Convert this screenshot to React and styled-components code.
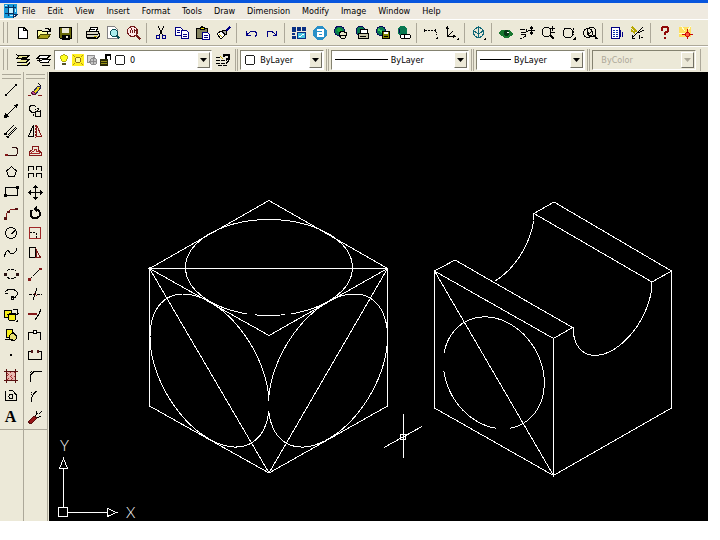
import React from 'react'
import styled, { createGlobalStyle } from 'styled-components'

const face = '#ece9d8'
const shadow = '#aca899'

const menus = ['File', 'Edit', 'View', 'Insert', 'Format', 'Tools', 'Draw', 'Dimension', 'Modify', 'Image', 'Window', 'Help']

// every icon is drawn on a 16 x 16 grid
const icons = {
    new: <path d="M3.500 2.500H9l3 3v8H3.500zM8.500 2.500v3h3" fill="#fff" />,
    open: <><path d="M1.500 13.500V5.500h4l1 1h5v3" fill="#ffffa0" /><path d="M1.500 13.500L4.500 9.500h10l-3 4z" fill="#a8a018" stroke="#484808" /><path d="M9 3.500h3l2 2M14 3v3h-3" /></>,
    save: <><path d="M2.500 2.500h12v11h-11l-1-1z" fill="#686808" /><path d="M5 3h7v5H5z" fill="#ece9d8" stroke="none" /><path d="M5 10h7v4H5z" fill="#000" /><path d="M9 11h2v2H9z" fill="#ece9d8" stroke="none" /></>,
    print: <><path d="M5.500 6.500l1-4h7l-1 4" fill="#fff" /><path d="M2 6.500h12l1 2v3l-2 2H4l-2-2z" fill="#d8d4c4" /><path d="M2 9.500h12M4 12h8M7 4.500h4" /><path d="M10 11h3" stroke="#b8a800" /></>,
    preview: <><path d="M2.500 1.500h7l3 3v9h-10z" fill="#fff" stroke="#848284" /><circle cx="9" cy="8" r="3.500" fill="#a8ecec" stroke="#084c54" /><path d="M11.500 10.500l3 3" stroke="#084c54" strokeWidth="2" /></>,
    find: <><circle cx="6.500" cy="6.500" r="5" fill="#ffe8e8" stroke="#701818" /><path d="M4 8l1.500-4L7 8M8.500 4v4M9 5.500h1v2" stroke="#701818" /><path d="M10.500 10.500l4 4" stroke="#701818" strokeWidth="2" /></>,
    cut: <><path d="M5 1l4.500 9M11 1L6.500 10" stroke="#000" /><circle cx="5" cy="12" r="2" stroke="#000084" /><circle cx="11" cy="12" r="2" stroke="#000084" /></>,
    copy: <><path d="M1.500 2.500h5l2 2v6h-7z" fill="#fff" stroke="#000084" /><path d="M7.500 5.500h5l2 2v6h-7z" fill="#fff" stroke="#000084" /><path d="M3 5.500h3M3 7.500h3M9 9.500h4M9 11.500h4" stroke="#000084" /></>,
    paste: <><path d="M1.500 3.500h11v10h-11z" fill="#848460" /><path d="M5 4.500V2.500h1l1-1 1 1h1v2z" fill="#e8e000" /><path d="M7.500 7.500h5l2 2v5h-7z" fill="#fff" stroke="#000084" /><path d="M9 10.500h4M9 12.500h4" stroke="#000084" /></>,
    match: <><path d="M1 9l4-3 4 4-4 4z" fill="#fff" /><path d="M6 6l3-1 2 2-1 3z" fill="#a8a8a8" /><path d="M10 6l4-4" stroke="#000084" strokeWidth="2" /><path d="M3 9l3 3" stroke="#b8a800" /></>,
    undo: <path d="M3.500 6v4h4M4 9.500l4-3h4l1 1v3l-1 1" stroke="#000084" />,
    redo: <path d="M12.500 6v4h-4M12 9.500l-4-3H4l-1 1v3l1 1" stroke="#000084" />,
    today: <><path d="M1 2h4v5H1zM6 2h4v4H6zM11 2h4v4h-4zM1 8h3v2H1zM1 11h4v3H1z" fill="#083084" stroke="none" /><path d="M6.500 7.500h8v6h-8z" fill="#48c4e0" stroke="#083084" /><path d="M8 12l5-3" stroke="#fff" /></>,
    point: <><circle cx="8" cy="8" r="6.500" fill="#2890c8" stroke="#2890c8" /><path d="M5 5h5.500v6H6V8h4" stroke="#fff" strokeWidth="2" /></>,
    meet: <><circle cx="6.500" cy="6" r="5" fill="#087850" stroke="#080860" /><path d="M3 5l3-2 3 3-3 2z" fill="#18a838" stroke="none" /><path d="M6 8l3-2 5 2-2 5H8z" fill="#e8e4c8" /><path d="M8 10h4" /></>,
    publish: <><circle cx="6.500" cy="6" r="4.500" fill="#087850" stroke="#080860" /><path d="M6.500 4.500h7v4h-7z" fill="#fff" /><path d="M4.500 8.500h10v5h-10z" fill="#c8c4a8" /><path d="M6 11.500h6" /></>,
    etransmit: <><circle cx="6" cy="6" r="4.500" fill="#087850" stroke="#080860" /><path d="M3 4l4 3" stroke="#40c860" strokeWidth="2" /><path d="M7.500 6.500h7v7h-7z" fill="#848400" /><path d="M9 7h4v2H9z" fill="#fff" stroke="none" /><path d="M9 11.500h4" /></>,
    link: <><circle cx="6.500" cy="6" r="4.500" fill="#087850" stroke="#087850" /><path d="M3 4v4" stroke="#080860" /><rect x="4.500" y="9.500" width="6" height="4" rx="2" fill="#fff" /><rect x="8.500" y="9.500" width="6" height="4" rx="2" fill="#fff" /></>,
    track: <><path d="M2 5.500h10" strokeDasharray="2 1" /><path d="M13.500 7v4" strokeDasharray="1 1" /><path d="M1.500 4v3M12.500 4v3" /><path d="M15 14v-3l-3 3z" fill="#000" stroke="none" /></>,
    ucs: <><path d="M3.500 2v9.500H11M3.500 11.500l5-5" /><path d="M2 4l1.500-2L5 4M9 10l2 1.500L9 13" /><path d="M15 15v-3l-3 3z" fill="#000" stroke="none" /></>,
    orbit: <><circle cx="7.500" cy="7.500" r="5" stroke="#106878" /><path d="M7.500 1v12M3 6l4.500 3L12 6M4.500 4l3-2 3 2" stroke="#106878" /><path d="M15 15v-3l-3 3z" fill="#000" stroke="none" /></>,
    aerial: <><path d="M1 8l4-3 6 0 4 4-4 3H6z" fill="#187830" stroke="#187830" /><circle cx="8.500" cy="8" r="2.500" fill="#083818" stroke="#083818" /><path d="M9 7.500h2" stroke="#fff" /></>,
    pan: <><path d="M1 4.500h6l1 2-2 1v4l-3 2H1M2 7.500h4M2 9.500h4" strokeDasharray="5 1" /><path d="M12.500 2v7M9 5.500h7M11 3.500l1.500-2 1.500 2M11 7.500l1.500 2 1.500-2" /></>,
    zoomRt: <><circle cx="6.500" cy="7" r="4.500" /><path d="M10 10l4 4" strokeWidth="2" /><path d="M12.500 1v5M10 3.500h5M11 7.500h4" /></>,
    zoomWin: <><circle cx="7" cy="8" r="5" /><path d="M3 3.500h6M12.500 3v7" strokeDasharray="2 1" /><path d="M15 15v-4l-4 4z" fill="#000" stroke="none" /></>,
    zoomPrev: <><circle cx="6" cy="8" r="4.500" /><circle cx="9.500" cy="7" r="4.500" /><path d="M12 10l3 4" strokeWidth="2" /><path d="M10 6L6 10V7M6 10h3" /></>,
    props: <><path d="M2.500 2.500h8v11h-8z" fill="#fff" stroke="#000084" /><path d="M4 5.500h5M4 7.500h5M4 9.500h5M4 11.500h5" stroke="#0830a8" strokeDasharray="2 1" /><path d="M11.500 5v7M13.500 7v5" stroke="#000084" /></>,
    center: <><path d="M2 2l5 5M1 5l4 3" stroke="#b8a800" strokeWidth="2" /><path d="M2 13L13 2M8 8l6-3M2 10v3h3M9 10v4M11 12h2" /></>,
    help: <><path d="M5 6V3l1-1h4l1 1v3L8 8v2" stroke="#900808" strokeWidth="2" /><path d="M7 12h2v2H7z" fill="#900808" stroke="none" /></>,
    active: <><path d="M1 2h12v10H1z" fill="#ffe060" stroke="none" /><path d="M3 1l4 5M1 8h6M13 1L9 6" stroke="#ffffd0" /><path d="M9.500 4v10M4 9.500h11" stroke="#c80808" /><circle cx="9.500" cy="9.500" r="2" fill="#ff5838" stroke="#c80808" /></>,
    layers: <><path d="M4 3.500h10l-3 3H2zM2 10.500h9l3-3H6M2 13.500h10l3-3" fill="#e8e490" /><path d="M1 2l3 3M7 5.500h5" /></>,
    layerPrev: <><path d="M4 3.500h10l-3 3H1zM4 10.500h8l2-3H6" fill="#fff" /><path d="M6 13.500h8M1 8.500h5M5 10.500l-3-2 3-2" /></>,
    layerSet: <><path d="M1 5.500h6M1 8.500h10l2-2M1 11.500h10l3-3M3 13.500h9" strokeDasharray="4 1" /><path d="M9 5V2.500h5v4h-3" strokeWidth="2" /><path d="M5 4l3 3" stroke="#b8a800" /></>,
    bulb: <><path d="M5 8L4 5l1-2 2-1h2l2 1 1 2-1 3-2 2H7z" fill="#ffff20" stroke="#a8a000" /><path d="M6 11h4v3H6z" fill="#505028" stroke="none" /></>,
    sun: <><path d="M1 1h14v14H1z" fill="#fff020" stroke="none" /><circle cx="8" cy="8" r="3.500" fill="#ffffa0" stroke="#806008" /><path d="M2 2l3 3M14 2l-3 3M2 14l3-3M14 14l-3-3" stroke="#a88810" /></>,
    freeze: <><path d="M2.500 2.500h8v8h-8z" fill="#d8d8d8" stroke="#848284" /><circle cx="9.500" cy="9.500" r="4" fill="#c4c4c4" stroke="#848284" /><path d="M5 9.500h8M9.500 5v8" stroke="#848284" /></>,
    lock: <><path d="M1 7h9v8H1z" fill="#282808" stroke="none" /><path d="M8 7V2.500h5V8" strokeWidth="2" /><path d="M2 9.500h7M2 12.500h7" stroke="#a8a018" /></>,
    swatch: <path d="M3 3h10v10H3z" fill="#fff" />,

    line: <><path d="M3 13L13 3" /><path d="M2 12h2v2H2zM12 2h2v2h-2z" fill="#000" stroke="none" /></>,
    xline: <><path d="M2 14L14 2" /><path d="M1 15l1-5 4 4zM15 1l-5 1 4 4z" fill="#000" stroke="none" /></>,
    mline: <><path d="M2 11L11 2M5 14l9-9" /><path d="M3 14L14 3" strokeDasharray="2 1" /><path d="M1 10h3v2H1zM4 13h2v2H4z" fill="#000" stroke="none" /></>,
    pline: <><path d="M2 12.500h11l1.500-2V6l-2-2H9" stroke="#301010" /><path d="M2 11h3v2H2z" fill="#841818" stroke="none" /></>,
    polygon: <path d="M8.500 2.500l5 4.500-2 5.500h-6L3.500 7z" />,
    rect: <><path d="M2.500 3.500h12v8h-12z" /><path d="M1 10h3v3H1zM13 2h3v3h-3z" fill="#000" stroke="none" /></>,
    arc: <><path d="M3 13l1-5 3-3 6-1" stroke="#841818" /><path d="M1 12h3v3H1zM12 3h3v2h-3zM4 6h3v2H4z" fill="#501010" stroke="none" /></>,
    circle: <><circle cx="8" cy="8" r="5.500" /><path d="M8 8.500h1l3-3" /></>,
    spline: <path d="M1 12l2-5 2-2 2 3 3 1 3-3 1-3" />,
    ellipse: <><path d="M4 5l2-1.500h5L13 5M4 11l2 1.500h5L13 11" strokeDasharray="3 1" /><path d="M1 7h3v3H1zM13 7h3v3h-3z" fill="#281010" stroke="none" /></>,
    ellipseArc: <><path d="M2 6l3-2.500h6L14 6v3l-2 2.500H8" /><path d="M2 7.500h3M8 10h2v3H8z" /></>,
    insert: <><path d="M1.500 3.500h7v7h-7z" fill="#f8f018" /><circle cx="9" cy="10" r="4" fill="#f8f018" /><path d="M4 7.500h9M10 2.500h4V8M12 6l2 2 2-2" /><path d="M15 15v-3l-3 3z" fill="#000" stroke="none" /></>,
    block: <><path d="M3.500 2.500h6v8h-6z" fill="#f8f018" /><circle cx="10" cy="10" r="3.500" fill="#e8e078" /><path d="M2 12.500h8M9 4l4 5" /></>,
    dot: <path d="M7 7h2v2H7z" fill="#000" stroke="none" />,
    hatch: <><path d="M3 3h10v10H3z" fill="#e8b8b0" stroke="none" /><path d="M3.500 1v14M12.500 1v14M1 3.500h14M1 12.500h14" stroke="#581010" /><path d="M4 8l4-4M4 12l8-8M8 12l4-4M4 5l7 7" stroke="#a83030" strokeDasharray="1 1" /></>,
    region: <><path d="M2.500 3v9.500h11V7l-4-4.500H6" /><circle cx="8" cy="8.500" r="2" /></>,

    erase: <><path d="M6 10l5-6 3 1-5 7z" fill="#e8d018" stroke="#282858" /><path d="M4 11l2-2 3 3-2 1z" fill="#c84890" stroke="#501838" /><path d="M1 13.500h3M11 13.500h4" stroke="#841818" /><path d="M11 1l3 3" /></>,
    copyObj: <><path d="M8 3L5 2 2 4v3l3 2h4l2-2" /><circle cx="11" cy="11" r="3" /><path d="M4 9l4 5M8 3l6 5M8 6l3 3" strokeDasharray="2 1" /></>,
    mirror: <><path d="M6.500 2v11h-5z" /><path d="M9.500 2v11h5z" stroke="#841818" /><path d="M8 2v13" stroke="#841818" strokeDasharray="2 1" /></>,
    offset: <><path d="M2 12.500h12v-3l-2-2-1-4H6L5 7 2 9z" stroke="#841818" /><path d="M4 10.500h8V9L9 8V6H7v2L5 9z" stroke="#a82828" /></>,
    array: <path d="M6.500 6V2.500h-5V7M14.500 7V2.500h-5V6M6.500 13V9.500h-5V14M14.500 14V9.500h-5V13" />,
    move: <><path d="M8.500 2v12M2 8.500h12" /><path d="M8.500 1l3 3h-6zM8.500 16l3-3h-6zM1 8.500l3-3v6zM16 8.500l-3-3v6z" fill="#000" stroke="none" /></>,
    rotate: <><path d="M5 5L3.500 7v4L6 13h4l2.500-2V7L11 5H9" strokeWidth="2" /><path d="M8 1v6L4 4z" fill="#000" stroke="none" transform="translate(2 0)" /></>,
    scale: <><path d="M2.500 2.500h11v11h-11z" stroke="#a02828" /><path d="M3 7.500h6V13" strokeDasharray="2 1" /></>,
    stretch: <><path d="M2.500 12.500v-10h6v10z" /><path d="M8.500 3l5 9.500h-6M9 6v6" stroke="#781818" /></>,
    lengthen: <><path d="M4 12l9-9" strokeDasharray="2 1" /><path d="M1 12h3v3H1zM12 2h3v2h-3z" fill="#841818" stroke="none" /></>,
    trim: <><path d="M2 8.500h6M10 8.500h5" strokeDasharray="3 1" /><path d="M10 2L6 14" /><path d="M7 7l3 3" stroke="#841818" /></>,
    extend: <><path d="M1 7h9" stroke="#841818" strokeWidth="2" /><path d="M14 2l-2 5-4 6" /></>,
    breakPt: <><path d="M1.500 13V5.500h12V13" /><path d="M6.500 3.500h3v3h-3z" fill="#fff" /></>,
    breakObj: <><path d="M4 4.500H1.500v8h13v-8H12" /><path d="M4 3h2v3H4zM10 3h2v3h-2z" fill="#501818" stroke="none" /></>,
    chamfer: <><path d="M3.500 14V7l4-4H15" /><path d="M3.500 5V3h3" strokeDasharray="1 1" /></>,
    fillet: <><path d="M4.500 14v-4l2-4 3-3" /><path d="M4.500 7V4" strokeDasharray="1 1" /></>,
    explode: <><path d="M1 13l6-6 3 2-6 6z" fill="#981818" stroke="#581010" /><path d="M8 7l3-3M10 9l4-2M9 5V2M12 5l3-3" /></>,
}

const standardBar = [
    ['new', 'open', 'save'],
    ['print', 'preview', 'find'],
    ['cut', 'copy', 'paste', 'match'],
    ['undo', 'redo'],
    ['today', 'point', 'meet', 'publish', 'etransmit', 'link'],
    ['track', 'ucs'],
    ['orbit'],
    ['aerial', 'pan', 'zoomRt', 'zoomWin', 'zoomPrev'],
    ['props', 'center'],
    ['help', 'active'],
]

const drawTools = ['line', 'xline', 'mline', 'pline', 'polygon', 'rect', 'arc', 'circle', 'spline', 'ellipse', 'ellipseArc', 'insert', 'block', 'dot', 'hatch', 'region', 'text']
const modifyTools = ['erase', 'copyObj', 'mirror', 'offset', 'array', 'move', 'rotate', 'scale', 'stretch', 'lengthen', 'trim', 'extend', 'breakPt', 'breakObj', 'chamfer', 'fillet', 'explode']

function Icon({ name, size = 16 }) {
    return (
        <Glyph width={size} height={size} viewBox="0 0 16 16" aria-hidden="true">
            {icons[name]}
        </Glyph>
    )
}

function Tool({ name }) {
    return (
        <ToolButton type="button" aria-label={name}>
            {name === 'text' ? <Letter>A</Letter> : <Icon name={name} />}
        </ToolButton>
    )
}

function Combo({ label, value, grow, disabled, children }) {
    return (
        <ComboBox $grow={grow} $disabled={disabled}>
            {children}
            <Select aria-label={label} disabled={disabled} defaultValue={value}>
                <option>{value}</option>
            </Select>
            <DropArrow $disabled={disabled} aria-hidden="true">
                <svg width="7" height="4" viewBox="0 0 7 4"><path d="M0 0h7L3.500 4z" fill="currentColor" /></svg>
            </DropArrow>
        </ComboBox>
    )
}

function Palette({ tools, label }) {
    return (
        <PaletteColumn aria-label={label}>
            <TopGrip />
            <PaletteList>
                {tools.map(name => <Tool key={name} name={name} />)}
            </PaletteList>
        </PaletteColumn>
    )
}

// circle on a sheared face: centre, horizontal axis (ux, uy), vertical axis vy, angles in degrees
function faceArc(cx, cy, ux, uy, vy, from, to) {
    const points = []
    for (let a = from; a <= to; a += 3) {
        const t = a * Math.PI / 180
        const x = cx + ux * Math.cos(t)
        const y = cy + uy * Math.cos(t) + vy * Math.sin(t)
        points.push(x.toFixed(1) + ' ' + y.toFixed(1))
    }
    return 'M' + points.join('L')
}

function Drawing() {
    return (
        <Sheet viewBox="49 72 659 449" preserveAspectRatio="xMinYMin meet" role="img" aria-label="Isometric drawing">
            {/* cube with a circle on each face */}
            <path d="M149.500 268.500L269 200.500L387.500 268.500zL269 335.500L387.500 268.500V406L269 473L149.500 406V268.500L269 473L387.500 268.500" />
            <path d={faceArc(269, 267.5, 83.5, 0, 48, 105, 435)} />
            <path d={faceArc(269, 267.5, 83.5, 0, 48, 79, 100)} />
            <path d={faceArc(209.5, 370.5, 59.5, 33.7, 68.7, 6, 357)} />
            <path d={faceArc(328, 370.5, -59.5, 33.7, 68.7, 6, 357)} />

            {/* block with a half round slot */}
            <path d="M434.500 271L455 260L572.500 327.500L553.500 338.500L434.500 271V408L553.500 475.500L671.500 408V271L554 202L534 213.500L652 282L671.500 271" />
            <path d="M553.500 338V475.500L434.500 271" />
            <path d={faceArc(612.5, 304.5, -39.5, 22.5, 45.6, 0, 180)} />
            <path d={faceArc(494.5, 235.6, 39.5, -22.5, 45.6, 0, 90)} />
            <path d={faceArc(493.8, 372.8, 50.5, 10, 55, 88, 172)} />
            <path d={faceArc(493.8, 372.8, 50.5, 10, 55, 191, 431)} />

            {/* cursor */}
            <path d="M403.500 414V458M384 447.500L422 426.500M400.500 434.500h5v5h-5z" />

            {/* ucs icon */}
            <path d="M58.500 507.500h9v9h-9zM63.500 507V468M63.500 458.500l-4 10h8zM68 512.500H107M107.500 508.500v8l9-4z" />
            <AxisLabel x="60" y="451">Y</AxisLabel>
            <AxisLabel x="126" y="518">X</AxisLabel>
        </Sheet>
    )
}

function App() {
    return (
        <Window>
            <GlobalStyle />
            <TitleEdge />
            <MenuBar>
                <svg width="16" height="16" viewBox="0 0 16 16" aria-hidden="true" shapeRendering="crispEdges">
                    <path d="M1 1h13v10l-3 4H1z" fill="#1898d8" />
                    <path d="M2 4.500h11M2 10.500h9M5.500 2v11M10.500 2v9" stroke="#083060" strokeWidth="1" />
                    <path d="M6 5h4v5H6zM2 2h2v1H2zM12 6h1v3h-1zM7 12h3v1H7z" fill="#c0f0ff" />
                    <path d="M10 15v-4h5z" fill="#fff" stroke="#083060" />
                </svg>
                {menus.map(name => <MenuItem key={name} type="button">{name}</MenuItem>)}
            </MenuBar>
            <Bar>
                <SideGrip />
                {standardBar.map((group, i) => (
                    <Group key={i}>
                        {group.map(name => <Tool key={name} name={name} />)}
                    </Group>
                ))}
            </Bar>
            <Bar $last>
                <SideGrip />
                <Tool name="layers" />
                <Tool name="layerPrev" />
                <Combo label="Layer" value="0" grow={160}>
                    <Icon name="bulb" size={14} />
                    <Icon name="sun" size={14} />
                    <Icon name="freeze" size={14} />
                    <Icon name="lock" size={14} />
                    <Icon name="swatch" size={14} />
                </Combo>
                <Tool name="layerSet" />
                <Divider />
                <Combo label="Color" value="ByLayer" grow={82}>
                    <Icon name="swatch" size={14} />
                </Combo>
                <Divider />
                <Combo label="Linetype" value="ByLayer" grow={139}>
                    <Stroke $width="53px" />
                </Combo>
                <Divider />
                <Combo label="Lineweight" value="ByLayer" grow={109}>
                    <Stroke $width="31px" />
                </Combo>
                <Divider />
                <Combo label="Plot style" value="ByColor" grow={103} disabled />
                <BarEnd />
            </Bar>
            <Workspace>
                <Palette tools={drawTools} label="Draw" />
                <Palette tools={modifyTools} label="Modify" />
                <Drawing />
            </Workspace>
        </Window>
    )
}

export default App

const GlobalStyle = createGlobalStyle`
* {
    box-sizing: border-box;
}
body {
    margin: 0;
    background: #fff;
    font-family: "DejaVu Sans Condensed", "DejaVu Sans", sans-serif;
    font-size: 9px;
}
button, select {
    font: inherit;
    color: inherit;
}
`

const Window = styled.div`
display: flex;
flex-direction: column;
min-height: calc(100vh - 19px);
margin: 0 12px 19px 0;
background: ${face};
color: #000;
`

const TitleEdge = styled.div`
height: 3px;
background: #0855dd;
`

const MenuBar = styled.nav`
display: flex;
align-items: center;
height: 16px;
padding-left: 3px;
background: #efeae0;
`

const MenuItem = styled.button`
border: 0;
padding: 0;
margin-left: 3px;
background: none;
line-height: 14px;
& + & {
    margin-left: 12px;
}
`

const Bar = styled.div`
display: flex;
align-items: center;
height: ${props => props.$last ? '26px' : '27px'};
border-top: 1px solid #fff;
border-bottom: ${props => props.$last ? '0' : '1px'} solid ${shadow};
`

const SideGrip = styled.div`
width: 5px;
height: 21px;
margin: 0 4px 0 3px;
border: 1px solid ${shadow};
border-width: 0 1px;
`

const Group = styled.div`
display: flex;
& + & {
    margin-left: 2px;
    padding-left: 3px;
    border-left: 1px solid ${shadow};
}
`

const ToolButton = styled.button`
display: flex;
align-items: center;
justify-content: center;
width: 21px;
min-height: 20px;
flex-shrink: 0;
border: 0;
padding: 0;
background: none;
`

const Glyph = styled.svg`
flex-shrink: 0;
fill: none;
stroke: #000;
shape-rendering: crispEdges;
`

const Letter = styled.span`
font-family: "Liberation Serif", serif;
font-size: 16px;
font-weight: bold;
line-height: 16px;
`

const Divider = styled.div`
width: 3px;
height: 22px;
margin: 0 2px;
flex-shrink: 0;
border: 1px solid ${shadow};
border-width: 0 1px;
`

const ComboBox = styled.div`
display: flex;
align-items: center;
flex: ${props => props.$grow} 1 0;
min-width: 0;
height: 20px;
padding: 1px 1px 1px 2px;
border: 1px solid;
border-color: #848270 #fff #fff #848270;
background: ${props => props.$disabled ? face : '#fff'};
color: ${props => props.$disabled ? shadow : '#000'};
`

const Select = styled.select`
appearance: none;
flex: 1;
min-width: 0;
border: 0;
padding: 0 0 0 3px;
background: none;
line-height: 14px;
opacity: 1;
${ComboBox} > &:first-child {
    padding-left: 6px;
}
`

const DropArrow = styled.span`
display: flex;
align-items: center;
justify-content: center;
width: 13px;
height: 16px;
border: 1px solid;
border-color: #fff #716f64 #716f64 #fff;
background: ${face};
color: ${props => props.$disabled ? shadow : '#000'};
`

const Stroke = styled.span`
width: ${props => props.$width};
height: 1px;
margin-left: 1px;
background: #000;
`

const BarEnd = styled.div`
width: 3px;
height: 22px;
margin: 0 7px 0 2px;
border-right: 1px solid ${shadow};
`

const Workspace = styled.main`
display: flex;
flex: 1;
`

const PaletteColumn = styled.section`
width: 24px;
border-right: 1px solid ${shadow};
`

const TopGrip = styled.div`
height: 5px;
margin: 2px 2px 1px;
border: 1px solid ${shadow};
border-width: 1px 0;
`

const PaletteList = styled.div`
display: flex;
flex-direction: column;
height: 350px;
padding-bottom: 2px;
border-bottom: 1px solid ${shadow};
${ToolButton} {
    flex: 1;
}
`

const Sheet = styled.svg`
flex: 1;
min-width: 0;
margin-left: 1px;
background: #000;
fill: none;
stroke: #fff;
shape-rendering: crispEdges;
`

const AxisLabel = styled.text`
font-family: Lato, "Liberation Sans", sans-serif;
font-size: 15px;
font-weight: 300;
fill: #fff;
stroke: none;
`
